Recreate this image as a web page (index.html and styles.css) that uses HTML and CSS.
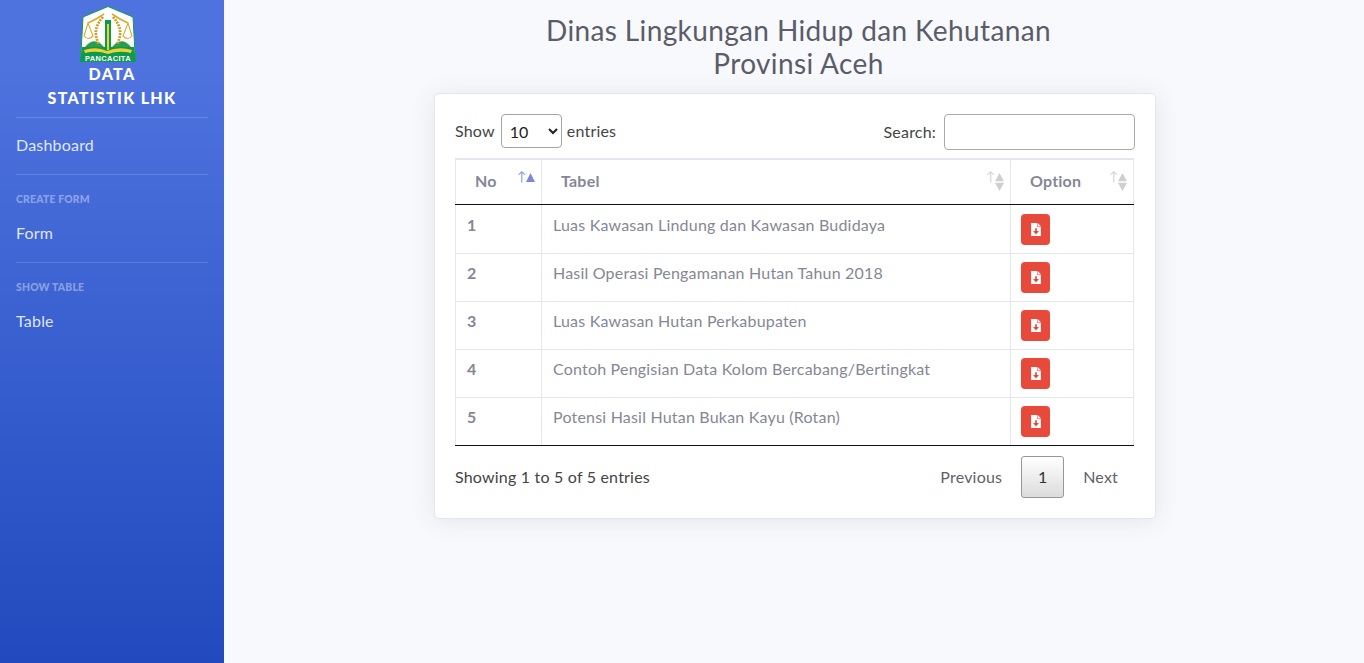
FILE: index.html
```html
<!DOCTYPE html>
<html lang="id">
<head>
<meta charset="utf-8">
<title>Data Statistik LHK</title>
<link rel="stylesheet" href="styles.css">
</head>
<body>
<div class="wrapper">
  <aside class="sidebar">
    <div class="brand">
      <svg class="logo" viewBox="0 0 56 56" width="56" height="56">
        <path d="M28 0.500 L53 11 L55.500 55.500 L0.500 55.500 L3 11 Z" fill="#fff" stroke="#0f9b50" stroke-width="1"/>
        <path d="M2 41 L54 41 L56 56 L0 56 Z" fill="#0b9a4e"/>
        <path d="M5 41 Q12 32 20 37 L24 41 Z M51 41 Q44 32 36 37 L32 41 Z" fill="#2aa04f"/>
        <path d="M25 14 H31 V43 H25 Z" fill="#0b9a4e"/>
        <path d="M27 18 H29 V44 H27 Z" fill="#f4cf32"/>
        <path d="M8 17 Q17 13 24 8 M48 17 Q39 13 32 8" fill="none" stroke="#d9ae2e" stroke-width="1.600"/>
        <path d="M8 17 L4 30 Q8 35 13 30 Z M48 17 L52 30 Q48 35 43 30 Z" fill="none" stroke="#d9ae2e" stroke-width="1.100"/>
        <path d="M23 11 Q11 24 19 38 M33 11 Q45 24 37 38" fill="none" stroke="#cfa42c" stroke-width="2.800" stroke-dasharray="2 1"/>
        <path d="M4 44 Q17 40 27 45 Q39 40 52 44 L51 47 Q39 44 28 48 Q17 44 5 47 Z" fill="#f4cf32"/>
        <text x="28" y="54.500" class="logo-text">PANCACITA</text>
      </svg>
      <div class="brand-text">DATA<br>STATISTIK LHK</div>
    </div>
    <hr class="rule rule-brand">
    <a class="nav-link">Dashboard</a>
    <hr class="rule">
    <div class="nav-heading">CREATE FORM</div>
    <a class="nav-link">Form</a>
    <hr class="rule">
    <div class="nav-heading">SHOW TABLE</div>
    <a class="nav-link">Table</a>
  </aside>
  <main class="main">
    <h1 class="title">Dinas Lingkungan Hidup dan Kehutanan<br>Provinsi Aceh</h1>
    <section class="card">
      <div class="controls">
        <label class="length">Show
          <select class="select"><option>10</option><option>25</option><option>50</option><option>100</option></select>
          entries</label>
        <label class="search">Search: <input class="search-input" type="search"></label>
      </div>
      <table class="table">
        <colgroup><col class="col-no"><col class="col-tabel"><col class="col-opt"></colgroup>
        <thead>
          <tr>
            <th class="sorting active">No</th>
            <th class="sorting">Tabel</th>
            <th class="sorting">Option</th>
          </tr>
        </thead>
        <tbody>
          <tr class="row-first"><td class="num">1</td><td>Luas Kawasan Lindung dan Kawasan Budidaya</td><td class="opt"><a class="pdf"><svg viewBox="0 0 9 12" width="10" height="13"><path d="M0 0H5.500V3.500H9V12H0Z" fill="#fff"/><path d="M6 0L9 3H6Z" fill="#fff"/><path d="M3.700 4.800H5.300V7.400H7.200L4.500 10.600L1.800 7.400H3.700Z" fill="#e74a3b"/></svg></a></td></tr>
          <tr><td class="num">2</td><td>Hasil Operasi Pengamanan Hutan Tahun 2018</td><td class="opt"><a class="pdf"><svg viewBox="0 0 9 12" width="10" height="13"><path d="M0 0H5.500V3.500H9V12H0Z" fill="#fff"/><path d="M6 0L9 3H6Z" fill="#fff"/><path d="M3.700 4.800H5.300V7.400H7.200L4.500 10.600L1.800 7.400H3.700Z" fill="#e74a3b"/></svg></a></td></tr>
          <tr><td class="num">3</td><td>Luas Kawasan Hutan Perkabupaten</td><td class="opt"><a class="pdf"><svg viewBox="0 0 9 12" width="10" height="13"><path d="M0 0H5.500V3.500H9V12H0Z" fill="#fff"/><path d="M6 0L9 3H6Z" fill="#fff"/><path d="M3.700 4.800H5.300V7.400H7.200L4.500 10.600L1.800 7.400H3.700Z" fill="#e74a3b"/></svg></a></td></tr>
          <tr><td class="num">4</td><td>Contoh Pengisian Data Kolom Bercabang/Bertingkat</td><td class="opt"><a class="pdf"><svg viewBox="0 0 9 12" width="10" height="13"><path d="M0 0H5.500V3.500H9V12H0Z" fill="#fff"/><path d="M6 0L9 3H6Z" fill="#fff"/><path d="M3.700 4.800H5.300V7.400H7.200L4.500 10.600L1.800 7.400H3.700Z" fill="#e74a3b"/></svg></a></td></tr>
          <tr><td class="num">5</td><td>Potensi Hasil Hutan Bukan Kayu (Rotan)</td><td class="opt"><a class="pdf"><svg viewBox="0 0 9 12" width="10" height="13"><path d="M0 0H5.500V3.500H9V12H0Z" fill="#fff"/><path d="M6 0L9 3H6Z" fill="#fff"/><path d="M3.700 4.800H5.300V7.400H7.200L4.500 10.600L1.800 7.400H3.700Z" fill="#e74a3b"/></svg></a></td></tr>
        </tbody>
      </table>
      <div class="footer">
        <div class="info">Showing 1 to 5 of 5 entries</div>
        <div class="pager">
          <a class="page-btn">Previous</a>
          <a class="page-btn current">1</a>
          <a class="page-btn">Next</a>
        </div>
      </div>
    </section>
  </main>
</div>
</body>
</html>
```
FILE: styles.css
```css
* { box-sizing: border-box; }
html, body { height: 100%; }
body {
  margin: 0;
  font-family: Lato, "Noto Sans", sans-serif;
  font-size: 16px;
  letter-spacing: .2px;
  color: #444;
  background: #f8f9fc;
  overflow: hidden;
}
.wrapper { display: flex; height: 663px; }
.sidebar {
  width: 224px;
  flex: none;
  padding: 6px 16px 0;
  color: #fff;
  background: linear-gradient(180deg, #4e73df 10%, #224abe 100%);
}
.brand { display: flex; flex-direction: column; align-items: center; }
.logo { display: block; margin-right: 8px; }
.logo-text {
  font-family: "Liberation Sans", sans-serif;
  font-size: 7.500px;
  font-weight: 700;
  fill: #fff;
  text-anchor: middle;
  letter-spacing: .3px;
}
.brand-text {
  font-size: 16px;
  font-weight: 900;
  line-height: 24px;
  text-align: center;
  letter-spacing: 1.300px;
}
.rule { height: 0; margin: 0; border: 0; border-top: 1px solid rgba(255,255,255,.15); }
.rule-brand { margin-top: 7px; }
.nav-link {
  display: block;
  height: 56px;
  line-height: 53px;
  color: rgba(255,255,255,.85);
}
.nav-heading {
  margin-top: 18px;
  height: 12px;
  line-height: 12px;
  font-size: 10.400px;
  font-weight: 900;
  color: rgba(255,255,255,.4);
}
.nav-heading + .nav-link { height: 57px; line-height: 55px; }
.main {
  flex: 1;
  display: flex;
  flex-direction: column;
  align-items: center;
  padding: 14px 0 0 2px;
}
.title {
  margin: 0 0 13px 7px;
  font-size: 28px;
  font-weight: 400;
  letter-spacing: .37px;
  line-height: 33px;
  text-align: center;
  color: #5a5c69;
}
.card {
  width: 722px;
  height: 426px;
  padding: 20px;
  background: #fff;
  border: 1px solid #e3e6f0;
  border-radius: 5px;
  box-shadow: 0 2px 24px rgba(58,59,69,.1);
}
.controls { display: flex; justify-content: space-between; align-items: flex-start; height: 36px; margin-bottom: 8px; }
.length { display: flex; align-items: center; gap: 6px; height: 32px; }
.select {
  width: 61px;
  height: 34px;
  margin-bottom: -2px;
  margin-right: -1px;
  padding: 0 4px;
  border: 1px solid #a4a4a4;
  border-radius: 4px;
  background: #fff;
  color: #222;
  font: inherit;
}
.search { display: flex; align-items: center; gap: 8px; line-height: 34px; }
.search-input { width: 191px; height: 36px; border: 1px solid #aaa; border-radius: 4px; background: #fff; }
.table { width: 678px; border-collapse: collapse; table-layout: fixed; color: #858796; }
.col-no { width: 86px; }
.col-tabel { width: 469px; }
.col-opt { width: 123px; }
.table th {
  position: relative;
  height: 45px;
  padding: 0 19px 2px;
  text-align: left;
  font-weight: 700;
  border: 1px solid #e3e6f0;
  border-top: 2px solid #e3e6f0;
  border-bottom: 1px solid #111;
}
.sorting::before, .sorting::after { position: absolute; }
.sorting::before { content: "↑"; top: 10px; right: 14px; font-size: 13px; line-height: 1; color: #d4d4d4; font-weight: 400; }
.sorting::after {
  content: "";
  top: 13px;
  right: 6px;
  width: 9px;
  height: 18px;
  background: #cfcfcf;
  clip-path: polygon(50% 0, 100% 46%, 0 46%, 50% 0, 50% 100%, 0 54%, 100% 54%, 50% 100%);
}
.sorting.active::before { color: #7f9bd8; }
.sorting.active::after { height: 9px; background: #7d85dc; clip-path: polygon(50% 0, 100% 100%, 0 100%); }
.table td {
  height: 48px;
  padding: 0 11px 9px;
  border: 1px solid #e3e6f0;
}
.table .row-first td { height: 49px; padding-bottom: 8px; }
.table tbody tr:last-child td { border-bottom: 1px solid #111; }
.table td.num { font-weight: 700; }
.table td.opt { padding: 0 10px; }
.pdf {
  display: flex;
  align-items: center;
  justify-content: center;
  width: 29px;
  height: 31px;
  margin-top: 1px;
  background: #e74a3b;
  border-radius: 4px;
}
.footer { display: flex; justify-content: space-between; align-items: center; margin-top: 10px; }
.pager { display: flex; align-items: center; }
.page-btn { display: block; padding: 0 16px 0 18px; height: 42px; line-height: 40px; color: #5f6168; border: 1px solid transparent; }
.page-btn.current {
  width: 43px;
  margin-left: 2px;
  padding: 0;
  text-align: center;
  color: #333;
  border-color: #979797;
  border-radius: 3px;
  background: linear-gradient(180deg, #fff, #dcdcdc);
}
```
